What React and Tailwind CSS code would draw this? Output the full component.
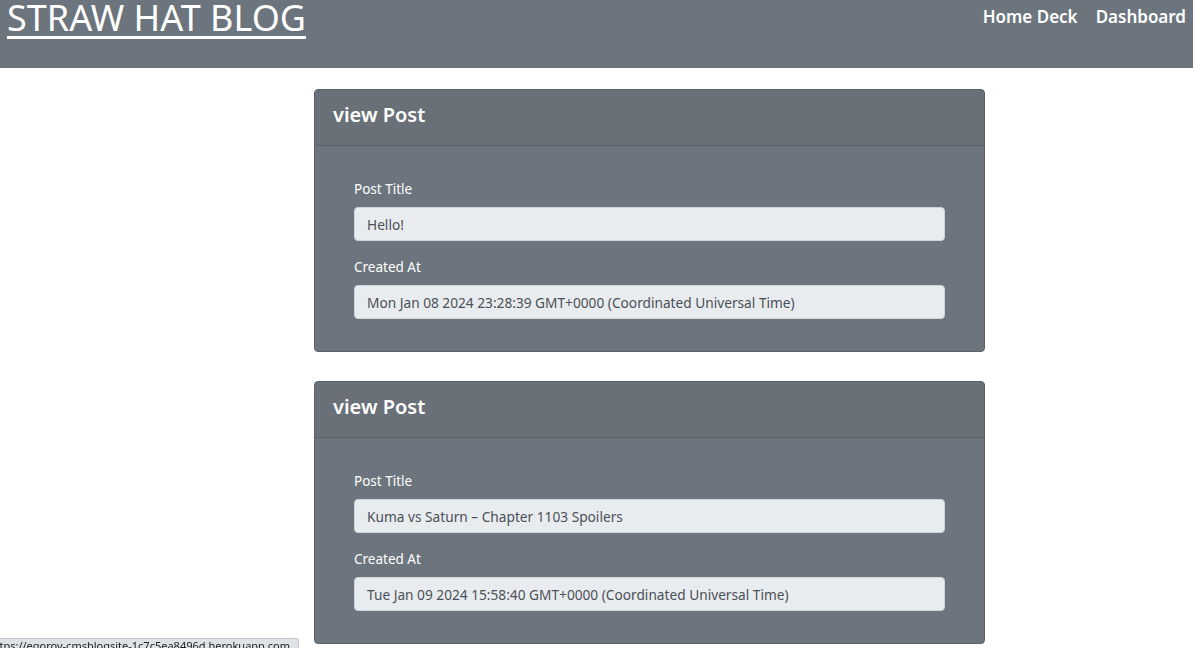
const posts = [
  { title: "Hello!", created: "Mon Jan 08 2024 23:28:39 GMT+0000 (Coordinated Universal Time)" },
  { title: "Kuma vs Saturn – Chapter 1103 Spoilers", created: "Tue Jan 09 2024 15:58:40 GMT+0000 (Coordinated Universal Time)" },
];

const PostCard = ({ post }) => (
  <div className="w-[671px] rounded-[4px] border border-[#5b6168] bg-[#6c757d]">
    <div className="h-[56px] border-b border-[#5b6168] bg-[#697077] px-[18px] pb-[6px] flex items-center">
      <h4 className="text-[20px] font-semibold text-white leading-none">view Post</h4>
    </div>
    <div className="px-[39px] pt-[33px] pb-[32px]">
      <label className="block text-[13.5px] leading-[21px] text-white mb-[7px]">Post Title</label>
      <input
        readOnly
        value={post.title}
        className="w-full h-[34px] rounded-[4px] border border-[#ced4da] bg-[#e9ecef] px-3 text-[13.7px] text-[#495057] outline-none"
      />
      <label className="block text-[13.5px] leading-[21px] text-white mt-[16px] mb-[7px]">Created At</label>
      <input
        readOnly
        value={post.created}
        className="w-full h-[34px] rounded-[4px] border border-[#ced4da] bg-[#e9ecef] px-3 text-[13.7px] text-[#495057] outline-none"
      />
    </div>
  </div>
);

export default function App() {
  return (
    <div className="min-h-screen bg-white font-['Noto_Sans','Open_Sans',sans-serif]">
      <header className="h-[68px] bg-[#6c757d] flex justify-between items-start px-[7px]">
        <a href="#" className="-mt-[2px] text-[36px] leading-[40px] text-white underline decoration-[3px] underline-offset-[5px]">
          STRAW HAT BLOG
        </a>
        <nav className="flex gap-[18px] pt-[4px]">
          <a href="#" className="text-[17px] font-semibold text-white">Home Deck</a>
          <a href="#" className="text-[17px] font-semibold text-white">Dashboard</a>
        </nav>
      </header>

      <main className="pl-[314px] pt-[21px] flex flex-col gap-[29px]">
        {posts.map((p, i) => (
          <PostCard key={i} post={p} />
        ))}
      </main>

      <div className="fixed bottom-0 left-0 h-[10px] w-[299px] overflow-hidden rounded-tr-[3px] border-t border-r border-[#c4c6ca] bg-[#dee1e6] flex justify-end items-start pr-[8px]">
        <span className="whitespace-nowrap text-[11px] leading-[14px] text-[#202124]">https://egorov-cmsblogsite-1c7c5ea8496d.herokuapp.com</span>
      </div>
    </div>
  );
}
